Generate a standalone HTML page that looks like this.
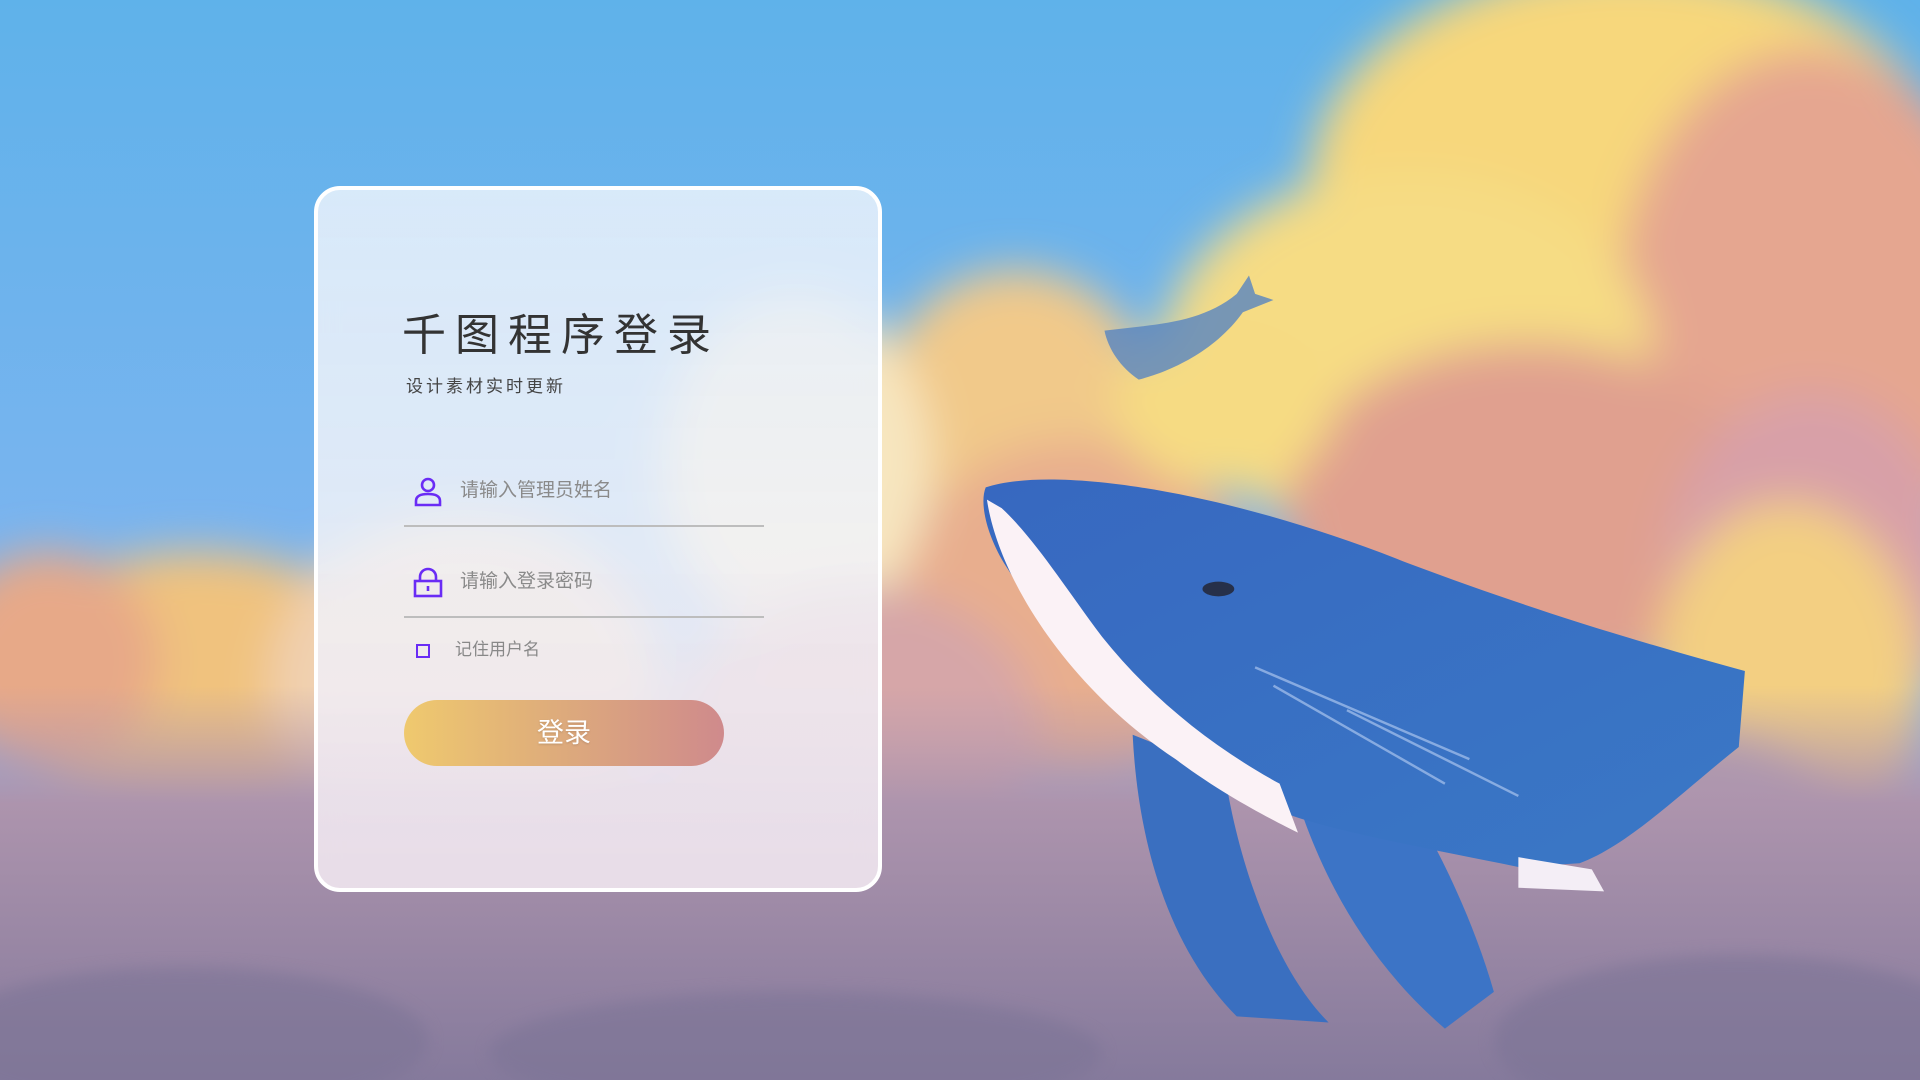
<!DOCTYPE html>
<html><head><meta charset="utf-8"><style>
html,body{margin:0;padding:0;width:1920px;height:1080px;overflow:hidden;font-family:"Liberation Sans","Noto Sans CJK SC",sans-serif}
#bg{position:absolute;left:0;top:0;width:1920px;height:1080px}
.card{position:absolute;left:314px;top:186px;width:568px;height:706px;box-sizing:border-box;border:4px solid #fff;border-radius:26px;background:linear-gradient(180deg,rgba(228,239,251,.9) 0%,rgba(240,242,248,.86) 50%,rgba(242,232,240,.88) 100%);backdrop-filter:blur(12px);-webkit-backdrop-filter:blur(12px);overflow:hidden}
.t{position:absolute;left:84px;top:124px;font-size:44px;letter-spacing:9px;color:#333;white-space:nowrap;line-height:1}
.s{position:absolute;left:88px;top:188px;font-size:17px;letter-spacing:3px;color:#444;white-space:nowrap;line-height:1}
.ph{position:absolute;left:142px;font-size:19px;color:#8a8a8a;white-space:nowrap;line-height:1}
.line{position:absolute;left:86px;width:360px;height:2px;background:#bdbdbd}
.ic{position:absolute;left:94px}
.cb{position:absolute;left:98px;top:454px;width:10px;height:10px;border:2px solid #6a2cf5}
.cl{position:absolute;left:137px;top:451px;font-size:17px;color:#888;white-space:nowrap;line-height:1}
.btn{position:absolute;left:86px;top:510px;width:320px;height:66px;border-radius:33px;background:linear-gradient(90deg,#efc96e,#ddaa7c 50%,#cf8a8c);color:#fff;font-size:27px;text-align:center;line-height:66px;text-shadow:0 1px 2px rgba(0,0,0,.15)}
</style></head><body>
<svg id="bg" viewBox="0 0 1568 882" preserveAspectRatio="none">
<defs>
<linearGradient id="sky" x1="0" y1="0" x2="0" y2="1"><stop offset="0" stop-color="#5fb2ea"/><stop offset=".5" stop-color="#7ab4ef"/><stop offset="1" stop-color="#8fa8e6"/></linearGradient>
<linearGradient id="bot" x1="0" y1="0" x2="0" y2="1"><stop offset="0" stop-color="#b79bb0" stop-opacity="0"/><stop offset=".3" stop-color="#ad94ad"/><stop offset="1" stop-color="#857a9c"/></linearGradient>
<filter id="bl"><feGaussianBlur stdDeviation="18"/></filter>
<filter id="bl2"><feGaussianBlur stdDeviation="6"/></filter>
<linearGradient id="wh" x1="0" y1="0" x2="1" y2="1"><stop offset="0" stop-color="#3768c0"/><stop offset="1" stop-color="#3a78c6"/></linearGradient>
</defs>
<rect width="1568" height="882" fill="url(#sky)"/>
<g filter="url(#bl)">
<ellipse cx="1330" cy="150" rx="260" ry="180" fill="#f7d77c"/>
<ellipse cx="1480" cy="260" rx="160" ry="220" fill="#e5a690"/>
<ellipse cx="1150" cy="290" rx="200" ry="150" fill="#f6dc84"/>
<ellipse cx="1250" cy="420" rx="200" ry="140" fill="#e0a08f"/>
<ellipse cx="1480" cy="470" rx="120" ry="150" fill="#d8a0a8"/>
<ellipse cx="1460" cy="560" rx="110" ry="150" fill="#f3cf82"/>
<ellipse cx="830" cy="330" rx="110" ry="110" fill="#f1c98a"/>
<ellipse cx="880" cy="500" rx="150" ry="140" fill="#e8ae8e"/>
<ellipse cx="1000" cy="330" rx="90" ry="70" fill="#f6db83"/>
<ellipse cx="650" cy="380" rx="110" ry="140" fill="#f7e6c0"/>
<ellipse cx="160" cy="560" rx="170" ry="110" fill="#f0c27e"/>
<ellipse cx="40" cy="540" rx="90" ry="90" fill="#e7a988"/>
<ellipse cx="380" cy="560" rx="160" ry="140" fill="#f0d0b0"/>
<ellipse cx="700" cy="600" rx="150" ry="120" fill="#d6a6a8"/>
<ellipse cx="1380" cy="720" rx="140" ry="120" fill="#a99bb0"/>
</g>
<rect y="560" width="1568" height="322" fill="url(#bot)"/>
<g filter="url(#bl2)" fill="#7d7596" opacity=".6">
<ellipse cx="150" cy="850" rx="200" ry="60"/><ellipse cx="650" cy="860" rx="250" ry="50"/><ellipse cx="1420" cy="850" rx="200" ry="70"/>
</g>
<path d="M902 270 C940 265 980 265 1010 240 L1020 225 L1025 240 L1040 245 L1015 255 C990 290 950 305 930 310 C915 300 905 285 902 270Z" fill="#5884c0" opacity=".8"/>
<path d="M925 600 C930 700 960 780 1010 830 L1085 835 C1040 790 1010 700 1000 630Z" fill="#3a6fc0"/>
<path d="M1050 620 C1070 700 1110 780 1180 840 L1220 810 C1200 740 1160 660 1120 610Z" fill="#3c74c6"/>
<path d="M805 398 C860 380 1000 400 1150 460 C1270 505 1360 530 1425 548 L1420 610 C1370 650 1330 690 1290 705 L1240 708 C1150 690 1070 675 1040 660 C950 620 870 540 820 460 C805 435 800 410 805 398Z" fill="url(#wh)"/>
<path d="M806 408 C815 470 870 560 960 620 C1000 650 1040 670 1060 680 L1045 640 C990 610 940 570 900 520 C870 480 845 440 818 415Z" fill="#fbf2f6"/>
<path d="M1240 700 L1300 710 L1310 728 L1240 725Z" fill="#f4eef6"/>
<ellipse cx="995" cy="481" rx="13" ry="6" fill="#26304a"/>
<path d="M1025 545 L1200 620 M1040 560 L1180 640 M1100 580 L1240 650" stroke="#a9c4ee" stroke-width="2" opacity=".7"/>
</svg>
<div class="card">
<div class="t">千图程序登录</div>
<div class="s">设计素材实时更新</div>
<svg class="ic" style="top:286px" width="32" height="32" viewBox="0 0 32 32" fill="none" stroke="#6a2cf5" stroke-width="2.6"><circle cx="16" cy="9" r="6"/><path d="M4 29 V25 C4 20 9 18 16 18 C23 18 28 20 28 25 V29Z"/></svg>
<div class="ph" style="top:291px">请输入管理员姓名</div>
<div class="line" style="top:335px"></div>
<svg class="ic" style="top:377px" width="32" height="32" viewBox="0 0 32 32" fill="none" stroke="#6a2cf5" stroke-width="2.6"><path d="M8 14 V10 C8 5 12 2 16 2 C20 2 24 5 24 10 V14"/><rect x="3" y="14" width="26" height="15"/><path d="M16 19 V24"/></svg>
<div class="ph" style="top:382px">请输入登录密码</div>
<div class="line" style="top:426px"></div>
<div class="cb"></div>
<div class="cl">记住用户名</div>
<div class="btn">登录</div>
</div>
</body></html>
